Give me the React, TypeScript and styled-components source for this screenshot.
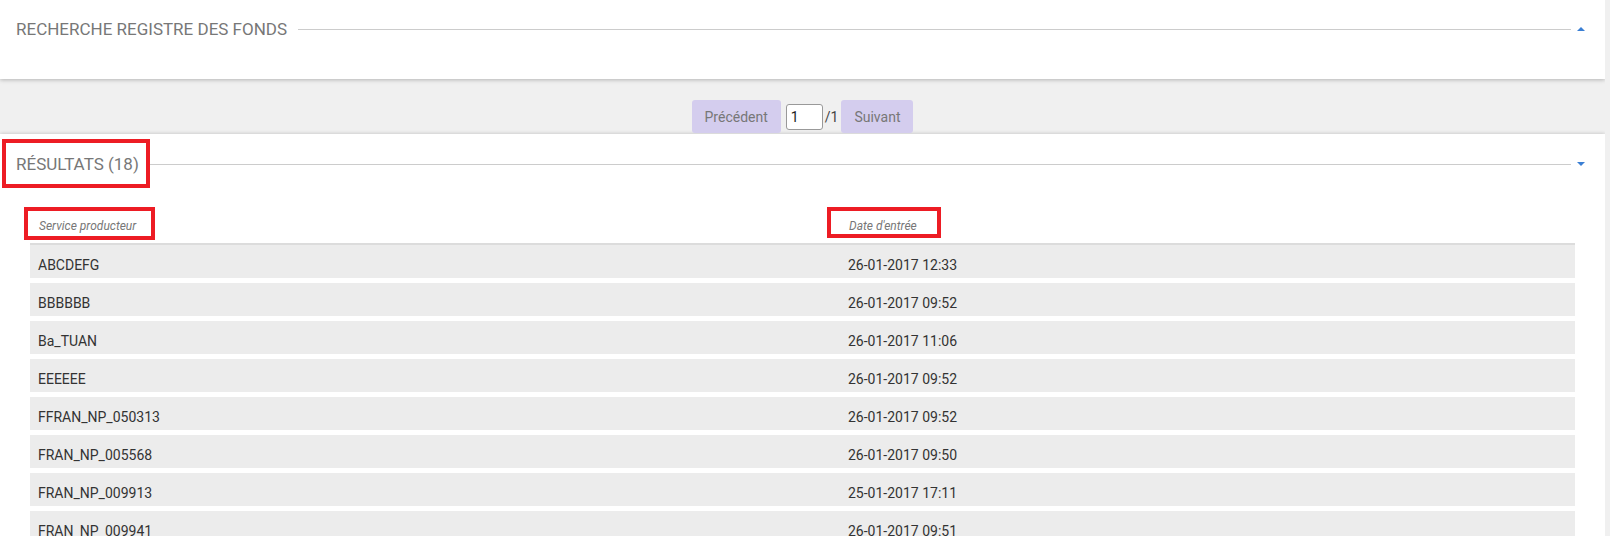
import React from 'react';
import styled, { createGlobalStyle } from 'styled-components';

const GlobalStyle = createGlobalStyle`
  html, body {
    margin: 0;
    padding: 0;
    background: #f0f0f0;
    font-family: Roboto, 'Liberation Sans', sans-serif;
  }
`;

type Fonds = { service: string; date: string };

const rows: Fonds[] = [
  { service: 'ABCDEFG', date: '26-01-2017 12:33' },
  { service: 'BBBBBB', date: '26-01-2017 09:52' },
  { service: 'Ba_TUAN', date: '26-01-2017 11:06' },
  { service: 'EEEEEE', date: '26-01-2017 09:52' },
  { service: 'FFRAN_NP_050313', date: '26-01-2017 09:52' },
  { service: 'FRAN_NP_005568', date: '26-01-2017 09:50' },
  { service: 'FRAN_NP_009913', date: '25-01-2017 17:11' },
  { service: 'FRAN_NP_009941', date: '26-01-2017 09:51' },
];

type Inset = { t: number; r: number; b: number; l: number };

const App = () => {
  return (
    <>
      <GlobalStyle />
      <Page>
        <SearchPanel>
          <PanelHeader>
            <PanelTitle>Recherche registre des fonds</PanelTitle>
            <Rule />
            <Caret $up />
          </PanelHeader>
        </SearchPanel>

        <Pager>
          <PagerButton>Précédent</PagerButton>
          <PageInput defaultValue='1' />
          <PageTotal>/1</PageTotal>
          <PagerButton>Suivant</PagerButton>
        </Pager>

        <ResultsPanel>
          <PanelHeader>
            <PanelTitle>
              Résultats (18)
              <Highlight $i={{ t: -15, r: -11, b: -14, l: -14 }} />
            </PanelTitle>
            <Rule />
            <Caret />
          </PanelHeader>

          <Table>
            <HeadRow>
              <HeadCell>
                <HeadLabel>
                  Service producteur
                  <Highlight $i={{ t: -12, r: -19, b: -7, l: -15 }} />
                </HeadLabel>
              </HeadCell>
              <HeadCell>
                <HeadLabel>
                  Date d'entrée
                  <Highlight $i={{ t: -12, r: -24, b: -5, l: -22 }} />
                </HeadLabel>
              </HeadCell>
            </HeadRow>
            {rows.map((row) => (
              <Row key={row.service}>
                <Cell>{row.service}</Cell>
                <Cell>{row.date}</Cell>
              </Row>
            ))}
          </Table>
        </ResultsPanel>
      </Page>
    </>
  );
};

export default App;

const Page = styled.div`
  width: 1605px;
  height: 100vh;
  overflow: hidden;
`;

const SearchPanel = styled.section`
  height: 79px;
  box-sizing: border-box;
  padding-top: 19px;
  background: #fff;
  box-shadow: 0 1px 4px rgba(0, 0, 0, 0.25);
`;

const ResultsPanel = styled.section`
  padding-top: 20px;
  background: #fff;
  box-shadow: 0 0 4px rgba(0, 0, 0, 0.22);
  min-height: 600px;
`;

const PanelHeader = styled.div`
  display: flex;
  align-items: center;
  gap: 11px;
  padding: 0 20px 0 16px;
`;

const PanelTitle = styled.h2`
  position: relative;
  margin: 0;
  font-size: 17px;
  line-height: 20px;
  font-weight: 400;
  text-transform: uppercase;
  color: #777;
  white-space: nowrap;
`;

const Rule = styled.div`
  flex: 1;
  height: 1px;
  background: #ccc;
`;

const Caret = styled.span<{ $up?: boolean }>`
  width: 0;
  height: 0;
  margin-left: -5px;
  border-left: 4.5px solid transparent;
  border-right: 4.5px solid transparent;
  ${({ $up }) =>
    $up ? 'border-bottom: 4px solid #3a7fd4;' : 'border-top: 4px solid #3a7fd4;'}
`;

const Highlight = styled.span<{ $i: Inset }>`
  position: absolute;
  top: ${({ $i }) => $i.t}px;
  right: ${({ $i }) => $i.r}px;
  bottom: ${({ $i }) => $i.b}px;
  left: ${({ $i }) => $i.l}px;
  border: 4px solid #ed1c24;
  pointer-events: none;
`;

const Pager = styled.div`
  display: flex;
  justify-content: center;
  align-items: center;
  padding-top: 21px;
  margin-bottom: 1px;
`;

const PagerButton = styled.button`
  height: 33px;
  padding: 0 13px;
  border: none;
  border-radius: 3px;
  background: #d4cdee;
  color: #777;
  font-family: inherit;
  font-size: 14px;
`;

const PageInput = styled.input`
  width: 37px;
  height: 26px;
  box-sizing: border-box;
  margin-left: 5px;
  padding: 0 4px;
  border: 1px solid #999;
  border-radius: 3px;
  font-family: inherit;
  font-size: 14px;
  color: #222;
`;

const PageTotal = styled.span`
  margin: 0 3px 0 2px;
  font-size: 14px;
  color: #444;
`;

const Table = styled.div`
  margin: 32px 30px 0;
  display: flex;
  flex-direction: column;
  gap: 5px;
`;

const HeadRow = styled.div`
  display: grid;
  grid-template-columns: 810px 1fr;
  border-bottom: 2px solid #dcdcdc;
  margin-bottom: -5px;
`;

const HeadCell = styled.div`
  padding: 9px;
`;

const HeadLabel = styled.span`
  position: relative;
  font-size: 12px;
  line-height: 14px;
  font-style: italic;
  color: #777;
`;

const Row = styled.div`
  display: grid;
  grid-template-columns: 810px 1fr;
  height: 33px;
  box-sizing: border-box;
  padding-top: 10px;
  background: #ececec;
`;

const Cell = styled.div`
  padding: 0 8px;
  font-size: 14px;
  line-height: 20px;
  color: #333;
`;
